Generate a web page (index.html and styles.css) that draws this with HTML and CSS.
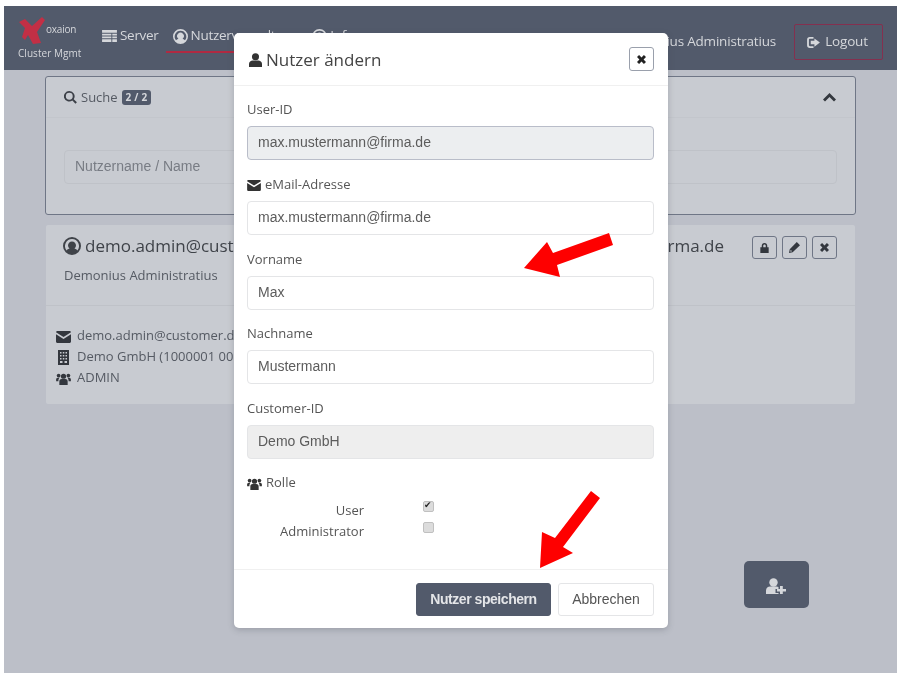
FILE: index.html
```html
<!DOCTYPE html>
<html lang="de">
<head>
  <meta charset="UTF-8">
  <meta name="viewport" content="width=device-width, initial-scale=1.0">
  <title>Cluster Mgmt</title>
  <link rel="stylesheet" href="styles.css">
</head>
<body>
  <svg class="sprite" width="0" height="0">
    <symbol id="i-user-circle" viewBox="0 0 18 18"><path fill-rule="evenodd" d="M9 0a9 9 0 1 0 0 18A9 9 0 0 0 9 0zm0 2a7 7 0 0 1 5.400 11.400C13.400 12.300 12 11.800 11.500 11.600a4 4 0 1 0-5 0c-.5.2-1.900.7-2.900 1.800A7 7 0 0 1 9 2z"/></symbol>
    <symbol id="i-server" viewBox="0 0 16 14"><path d="M0 0h16v3H0zM0 4h10v2H0zM11 4h5v2h-5zM0 7h10v2H0zM11 7h5v2h-5zM0 10h10v3H0zM11 10h5v3h-5z"/></symbol>
    <symbol id="i-user" viewBox="0 0 14 15"><circle cx="7" cy="4" r="3.800"/><path d="M0 15v-3.500C0 9.500 2 8 4 8h6c2 0 4 1.500 4 3.500V15z"/></symbol>
    <symbol id="i-user-plus" viewBox="0 0 21 16"><circle cx="7.500" cy="4.500" r="4.200"/><path d="M0 16v-3.500C0 10 2 8.500 4 8.500h6.500c.8 0 1.500.2 2 .5v2h-3v4h3v1z"/><path d="M14 8h2.800v3H20v2.600h-3.200V16H14v-2.400h-3V11h3z"/></symbol>
    <symbol id="i-envelope" viewBox="0 0 15 12"><path d="M1.500 0h12c.8 0 1.500.6 1.500 1.300L7.500 6 0 1.300C0 .6.700 0 1.500 0zM0 3.300l7.500 4.600L15 3.300v7.200c0 .8-.7 1.500-1.500 1.500h-12C.7 12 0 11.300 0 10.500z"/></symbol>
    <symbol id="i-building" viewBox="0 0 11 15"><path fill-rule="evenodd" d="M0 0h11v15H0zM2 2v1.500h1.500V2zm2.800 0v1.500h1.500V2zm2.700 0v1.500H9V2zM2 5v1.500h1.500V5zm2.800 0v1.500h1.500V5zm2.700 0v1.500H9V5zM2 8v1.500h1.500V8zm2.800 0v1.500h1.500V8zm2.700 0v1.500H9V8zM2 11v2h2.500v-2zm4.500 0v2H9v-2z"/></symbol>
    <symbol id="i-group" viewBox="0 0 16 13"><circle cx="8" cy="3.500" r="2.800"/><circle cx="2.700" cy="2.800" r="2"/><circle cx="13.300" cy="2.800" r="2"/><path d="M3.500 13V9c0-1.600 1.200-2.500 2.500-2.500h4c1.300 0 2.500.9 2.500 2.500v4zM0 9V7c0-1 .8-1.800 1.800-1.800h2C3 6 2.500 7 2.500 8.500V9zM16 9V7c0-1-.8-1.800-1.800-1.800h-2c.8.800 1.300 1.800 1.300 3.300V9z"/></symbol>
    <symbol id="i-search" viewBox="0 0 14 14"><path fill-rule="evenodd" d="M5.700 0a5.700 5.700 0 1 0 3.300 10.300l3.300 3.500 1.600-1.600-3.400-3.400A5.700 5.700 0 0 0 5.700 0zm0 2a3.700 3.700 0 1 1 0 7.400 3.700 3.700 0 0 1 0-7.400z"/></symbol>
    <symbol id="i-logout" viewBox="0 0 14 12"><path d="M3 0h4v2H3.200C2.500 2 2 2.500 2 3.200v5.600c0 .7.500 1.200 1.200 1.200H7v2H3a3 3 0 0 1-3-3V3a3 3 0 0 1 3-3z"/><path d="M8 1.500 14 6l-6 4.500V8H4V4h4z"/></symbol>
    <symbol id="i-lock" viewBox="0 0 10 12"><path fill-rule="evenodd" d="M5 0C3 0 1.700 1.400 1.700 3.300V5H0v7h10V5H8.300V3.300C8.300 1.400 7 0 5 0zm0 1.800c1 0 1.500.7 1.500 1.600V5h-3V3.400c0-.9.5-1.600 1.500-1.600z"/></symbol>
    <symbol id="i-pencil" viewBox="0 0 12 12"><path d="M8.500 0 12 3.500 4 11.200 0 12l.8-4zM1.800 8.500l-.4 2 2 -.4z"/></symbol>
    <symbol id="i-times" viewBox="0 0 10 10"><path d="M2.300 0 5 2.700 7.700 0 10 2.300 7.300 5 10 7.700 7.700 10 5 7.300 2.300 10 0 7.700 2.700 5 0 2.300z"/></symbol>
    <symbol id="i-chevron" viewBox="0 0 13 9"><path d="M6.500 0 13 6.500 11 8.500 6.500 4 2 8.500 0 6.500z"/></symbol>
  </svg>

  <div class="frame">
    <nav class="navbar">
      <div class="brand">
        <div class="brand-top">
          <svg class="brand-mark" viewBox="0 0 26 27"><path d="M0 5 6 2l7 7L23 0l3 3-8 12 4 11-8 1-5-9-3 5-3-3 3-9z"/></svg>
          <span class="brand-name">oxaion</span>
        </div>
        <div class="brand-sub">Cluster Mgmt</div>
      </div>
      <ul class="nav-links">
        <li class="nav-link"><svg class="ic ic-server"><use href="#i-server"/></svg>Server</li>
        <li class="nav-link active"><svg class="ic ic-nav"><use href="#i-user-circle"/></svg>Nutzerverwaltung</li>
        <li class="nav-link"><svg class="ic ic-nav"><use href="#i-user-circle"/></svg>Info</li>
      </ul>
      <span class="nav-user">Demonius Administratius</span>
      <button class="logout"><svg class="ic ic-logout"><use href="#i-logout"/></svg>Logout</button>
    </nav>

    <main class="content">
      <section class="panel search-panel">
        <div class="panel-head">
          <svg class="ic ic-search"><use href="#i-search"/></svg>
          <span>Suche</span>
          <span class="badge">2 / 2</span>
          <svg class="ic ic-chevron"><use href="#i-chevron"/></svg>
        </div>
        <div class="search-body">
          <input class="field-input search-input" placeholder="Nutzername / Name">
        </div>
      </section>

      <section class="panel user-card">
        <div class="card-head">
          <div class="card-title">
            <h2 class="user-name"><svg class="ic ic-title"><use href="#i-user-circle"/></svg>demo.admin@cust</h2>
            <span class="user-mail">demo.admin@firma.de</span>
            <div class="card-actions">
              <button class="btn-mini"><svg class="ic ic-lock"><use href="#i-lock"/></svg></button>
              <button class="btn-mini"><svg class="ic ic-pencil"><use href="#i-pencil"/></svg></button>
              <button class="btn-mini"><svg class="ic ic-times"><use href="#i-times"/></svg></button>
            </div>
          </div>
          <p class="user-full">Demonius Administratius</p>
        </div>
        <ul class="card-info">
          <li><svg class="ic ic-info"><use href="#i-envelope"/></svg>demo.admin@customer.de</li>
          <li><svg class="ic ic-info ic-building"><use href="#i-building"/></svg>Demo GmbH (1000001 001)</li>
          <li><svg class="ic ic-info"><use href="#i-group"/></svg>ADMIN</li>
        </ul>
      </section>
    </main>

    <button class="fab"><svg class="ic ic-fab"><use href="#i-user-plus"/></svg></button>

    <div class="modal">
      <header class="modal-head">
        <h3 class="modal-title"><svg class="ic ic-user"><use href="#i-user"/></svg>Nutzer ändern</h3>
        <button class="modal-close"><svg class="ic ic-close"><use href="#i-times"/></svg></button>
      </header>
      <form class="modal-body">
        <div class="field">
          <label class="field-label">User-ID</label>
          <input class="field-input locked" value="max.mustermann@firma.de" readonly>
        </div>
        <div class="field">
          <label class="field-label"><svg class="ic ic-mail"><use href="#i-envelope"/></svg>eMail-Adresse</label>
          <input class="field-input" value="max.mustermann@firma.de">
        </div>
        <div class="field">
          <label class="field-label">Vorname</label>
          <input class="field-input" value="Max">
        </div>
        <div class="field">
          <label class="field-label">Nachname</label>
          <input class="field-input" value="Mustermann">
        </div>
        <div class="field">
          <label class="field-label">Customer-ID</label>
          <input class="field-input disabled" value="Demo GmbH" readonly>
        </div>
        <div class="role-label"><svg class="ic ic-group"><use href="#i-group"/></svg>Rolle</div>
        <div class="roles">
          <label class="role-name">User</label><input type="checkbox" class="check" checked>
          <label class="role-name">Administrator</label><input type="checkbox" class="check">
        </div>
      </form>
      <footer class="modal-foot">
        <button class="btn btn-primary">Nutzer speichern</button>
        <button class="btn btn-default">Abbrechen</button>
      </footer>
    </div>
  </div>

  <svg class="arrows" viewBox="0 0 900 679">
    <polygon points="524,268 547,242 553,253 609,233 613,245 557,265 560,277"/>
    <polygon points="540,568 542,532 555,538 591,491 600,498 563,547 573,553"/>
  </svg>
</body>
</html>
```

FILE: styles.css
```css
* { box-sizing: border-box; }
body { margin: 0; height: 679px; padding: 6px 3px 6px 4px; background: #fff; font-family: "Open Sans", sans-serif; font-size: 13px; color: #555; position: relative; overflow: hidden; }
ul { list-style: none; margin: 0; padding: 0; }
h2, h3, p { margin: 0; font-weight: normal; }
button { font-family: inherit; cursor: pointer; padding: 0; }
.sprite { position: absolute; }
.ic { fill: currentColor; flex: none; vertical-align: middle; }

.frame { position: relative; height: 667px; background: #bcbfc8; overflow: hidden; filter: blur(0.45px); }

/* top bar */
.navbar { height: 64px; background: #525a6b; color: #d5d7db; display: flex; align-items: flex-start; padding: 0 14px; }
.brand { width: 77px; padding-top: 11px; }
.brand-top { display: flex; gap: 1px; height: 26px; }
.brand-mark { width: 26px; height: 27px; fill: #c22f45; margin-left: 1px; flex: none; }
.brand-name { font-size: 10px; line-height: 24px; letter-spacing: -0.2px; }
.brand-sub { font-size: 10px; line-height: 14px; margin-top: 3px; letter-spacing: 0.05px; white-space: nowrap; }
.nav-links { display: flex; }
.nav-link { height: 47px; padding: 19px 7px 0; font-size: 13.5px; line-height: 20px; letter-spacing: -0.3px; white-space: nowrap; }
.nav-link.active { box-shadow: inset 0 -2px 0 #b02a42; }
.ic-server { width: 15px; height: 13px; margin-right: 3px; }
.ic-nav { width: 15px; height: 15px; margin-right: 3px; }
.nav-user { margin-left: auto; margin-top: 25px; font-size: 13.5px; line-height: 20px; letter-spacing: -0.2px; }
.logout { width: 89px; height: 36px; margin-top: 18px; margin-left: 18px; padding: 0 2px 2px 0; background: none; border: 1px solid #84304f; border-radius: 2px; color: #d5d7db; font-size: 13.5px; letter-spacing: -0.2px; }
.ic-logout { width: 13px; height: 11px; margin-right: 5px; }

/* page content */
.content { padding: 6px 41px 0; }
.panel { background: #c8cbd1; }
.search-panel { height: 139px; border: 1.5px solid #6f7686; border-radius: 3px; margin-bottom: 10px; }
.panel-head { height: 41px; border-bottom: 1px solid #c3c6cc; display: flex; align-items: center; gap: 4px; padding: 0 18px; color: #555a63; }
.ic-search { width: 13px; height: 13px; color: #3c4048; }
.badge { background: #525a6b; color: #d5d7db; font-size: 10px; font-weight: 700; line-height: 15px; padding: 0 4px; border-radius: 3px; letter-spacing: .2px; }
.ic-chevron { width: 13px; height: 9px; margin-left: auto; margin-right: 1px; color: #33373e; }
.search-body { padding: 32px 18px 0; }
.user-card { margin: 0 1px; height: 179px; border-radius: 2px; }
.card-head { height: 81px; border-bottom: 1px solid #bfc2c8; padding: 10px 18px 0 17px; }
.card-title { display: flex; align-items: flex-start; }
.user-name, .user-mail { font-size: 17px; line-height: 22px; color: #3f4349; font-weight: 500; white-space: nowrap; }
.user-mail { margin-left: auto; }
.ic-title { width: 18px; height: 18px; margin-right: 4px; vertical-align: -3px; }
.card-actions { display: flex; gap: 5px; margin-left: 28px; margin-top: 1px; }
.btn-mini { width: 25px; height: 23px; background: #c8cbd1; border: 1px solid #6f7686; border-radius: 3px; color: #33373e; display: flex; align-items: center; justify-content: center; }
.ic-lock { width: 9px; height: 10px; }
.ic-pencil { width: 11px; height: 11px; }
.ic-times { width: 9px; height: 9px; }
.user-full { margin-top: 6px; padding-left: 1px; line-height: 20px; font-size: 13px; color: #555a63; }
.card-info { padding: 19px 10px 0; color: #555a63; font-size: 13px; line-height: 21px; }
.card-info li { white-space: nowrap; }
.ic-info { width: 15px; height: 12px; margin-right: 6px; color: #33373e; }
.ic-building { height: 15px; }

.fab { position: absolute; left: 740px; top: 555px; width: 65px; height: 47px; background: #525a6b; border: 0; border-radius: 5px; color: #d5d7db; }
.ic-fab { width: 21px; height: 16px; }

/* dialog */
.modal { position: absolute; left: 230px; top: 27px; width: 434px; background: #fff; border-radius: 5px; box-shadow: 0 2px 6px rgba(60, 64, 75, 0.25); }
.modal-head { height: 53px; border-bottom: 1px solid #f0f0f0; display: flex; align-items: center; justify-content: space-between; padding: 0 14px 0 15px; }
.modal-title { font-size: 17px; color: #444; line-height: 24px; padding-top: 2px; }
.ic-user { width: 13px; height: 14px; margin-right: 4px; vertical-align: -1px; color: #333; }
.modal-close { width: 25px; height: 24px; background: #fff; border: 1px solid #9aa0ac; border-radius: 3px; display: flex; align-items: center; justify-content: center; color: #222; }
.ic-close { width: 9px; height: 9px; }
.modal-body { padding: 15px 14px 26px 13px; }
.field { margin-bottom: 15.8px; }
.field-label { display: block; height: 16px; line-height: 16px; margin-bottom: 9px; font-size: 13px; color: #555; }
.ic-mail { width: 14px; height: 11px; margin-right: 4px; color: #333; }
.field-input { display: block; width: 100%; height: 34px; padding: 0 10px 2px; border: 1px solid #e4e5e7; border-radius: 4px; background: #fff; font-family: "Liberation Sans", Arial, sans-serif; font-size: 14px; color: #5c5c5c; outline: none; }
.field-input.locked { background: #eceef0; border: 1.5px solid #b9bdc9; }
.field-input.disabled { background: #eeeeee; }
.field-input.search-input { background: #c8cbd1; border-color: #bfc2c8; }
.search-input::placeholder { color: #787c84; opacity: 1; }
.role-label { height: 20px; line-height: 20px; margin-top: -3px; margin-bottom: 9px; font-size: 13px; }
.ic-group { width: 15px; height: 12px; margin-right: 4px; color: #333; }
.roles { display: grid; grid-template-columns: 117px 11px; column-gap: 59px; grid-auto-rows: 21px; }
.role-name { text-align: right; line-height: 19px; font-size: 13px; }
.check { appearance: none; width: 11px; height: 11px; margin: 0; background: #dcdcdc; border: 1px solid #c0c0c0; border-radius: 2px; position: relative; }
.check:checked::after { content: "✔"; position: absolute; left: 0; top: -3px; font-family: "DejaVu Sans", sans-serif; font-size: 9px; line-height: 13px; color: #222; }
.modal-foot { height: 59px; border-top: 1px solid #f0f0f0; display: flex; justify-content: flex-end; gap: 7px; padding: 13px 14px 0; }
.btn { height: 33px; padding-bottom: 1px; border-radius: 3px; font-family: "Liberation Sans", Arial, sans-serif; font-size: 14px; }
.btn-primary { width: 135px; background: #525a6b; border: 1px solid #525a6b; color: #e4e5e8; font-weight: 700; letter-spacing: -0.45px; }
.btn-default { width: 96px; background: #fff; border: 1px solid #e4e5e7; color: #555; }

/* hand-drawn red arrows on top of the screenshot */
.arrows { position: absolute; left: 0; top: 0; width: 900px; height: 679px; fill: #fe0000; pointer-events: none; }
```
